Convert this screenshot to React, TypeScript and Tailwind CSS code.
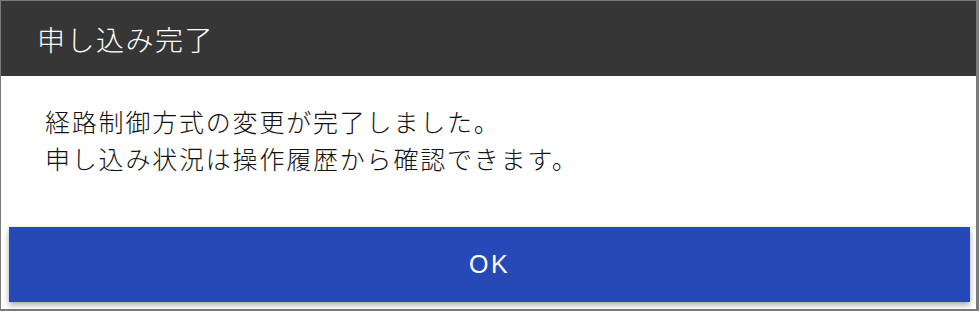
import React from "react";

export default function App() {
  return (
    <div className="w-[980px] h-[312px] bg-white overflow-hidden">
      <div
        className="w-[979px] h-[311px] border-l border-t border-b-2 border-r-[3px] border-[#7b7b7b] bg-white flex flex-col"
        style={{ fontFamily: '"Noto Sans CJK JP", "Noto Sans", sans-serif' }}
      >
        <div className="h-[75px] bg-[#363636] flex items-center pl-[36px]">
          <span className="text-white text-[28px] font-light tracking-[1.5px] leading-none">申し込み完了</span>
        </div>
        <div className="pl-[44px] pt-[27px] text-[25px] font-light leading-[37px] tracking-[1.8px] text-[#111111]">
          <p>経路制御方式の変更が完了しました。</p>
          <p>申し込み状況は操作履歴から確認できます。</p>
        </div>
        <div className="mt-auto mb-[7px] pl-[8px] pr-[6px]">
          <button
            className="w-full h-[75px] bg-[#2748b7] text-white text-[25px] font-normal tracking-[2.5px] shadow-[0_3px_6px_rgba(0,0,0,0.35)] flex items-center justify-center"
            style={{ fontFamily: '"Liberation Sans", Arial, sans-serif' }}
          >
            OK
          </button>
        </div>
      </div>
    </div>
  );
}
